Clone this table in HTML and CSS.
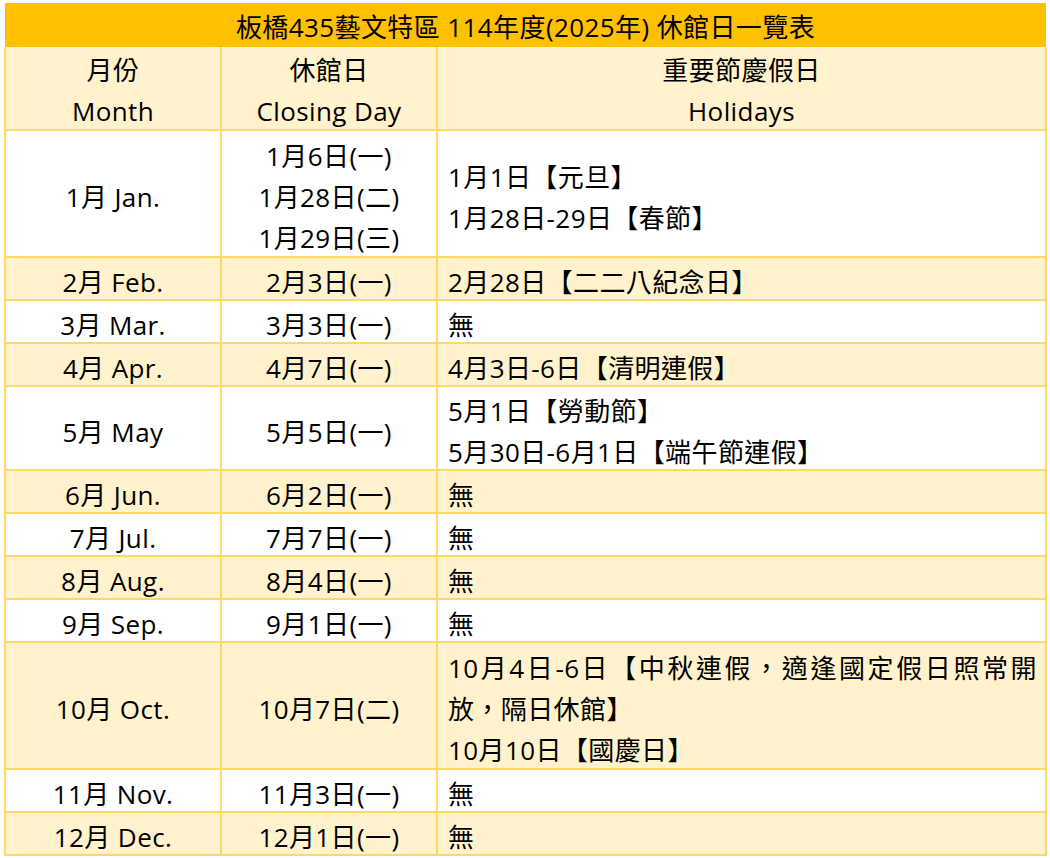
FILE: index.html
```html
<!DOCTYPE html>
<html lang="zh-Hant">
<head>
<meta charset="utf-8">
<title>板橋435藝文特區 114年度(2025年) 休館日一覽表</title>
<link rel="stylesheet" href="styles.css">
</head>
<body>
<div class="page">
<table class="sched">
  <colgroup>
    <col class="c1"><col class="c2"><col class="c3">
  </colgroup>
  <thead>
    <tr><th class="title" colspan="3"><span class="t">板橋435藝文特區 114年度(2025年) 休館日一覽表</span></th></tr>
    <tr class="hd">
      <th><span class="t">月份<br>Month</span></th>
      <th><span class="t">休館日<br>Closing Day</span></th>
      <th><span class="t">重要節慶假日<br>Holidays</span></th>
    </tr>
  </thead>
  <tbody>
    <tr class="w tall">
      <td><span class="t">1月 Jan.</span></td>
      <td><span class="t">1月6日(一)<br>1月28日(二)<br>1月29日(三)</span></td>
      <td class="hol"><span class="t">1月1日【元旦】<br>1月28日-29日【春節】</span></td>
    </tr>
    <tr class="y">
      <td><span class="t">2月 Feb.</span></td>
      <td><span class="t">2月3日(一)</span></td>
      <td class="hol"><span class="t">2月28日【二二八紀念日】</span></td>
    </tr>
    <tr class="w">
      <td><span class="t">3月 Mar.</span></td>
      <td><span class="t">3月3日(一)</span></td>
      <td class="hol"><span class="t">無</span></td>
    </tr>
    <tr class="y">
      <td><span class="t">4月 Apr.</span></td>
      <td><span class="t">4月7日(一)</span></td>
      <td class="hol"><span class="t">4月3日-6日【清明連假】</span></td>
    </tr>
    <tr class="w">
      <td><span class="t">5月 May</span></td>
      <td><span class="t">5月5日(一)</span></td>
      <td class="hol"><span class="t">5月1日【勞動節】<br>5月30日-6月1日【端午節連假】</span></td>
    </tr>
    <tr class="y">
      <td><span class="t">6月 Jun.</span></td>
      <td><span class="t">6月2日(一)</span></td>
      <td class="hol"><span class="t">無</span></td>
    </tr>
    <tr class="w">
      <td><span class="t">7月 Jul.</span></td>
      <td><span class="t">7月7日(一)</span></td>
      <td class="hol"><span class="t">無</span></td>
    </tr>
    <tr class="y">
      <td><span class="t">8月 Aug.</span></td>
      <td><span class="t">8月4日(一)</span></td>
      <td class="hol"><span class="t">無</span></td>
    </tr>
    <tr class="w">
      <td><span class="t">9月 Sep.</span></td>
      <td><span class="t">9月1日(一)</span></td>
      <td class="hol"><span class="t">無</span></td>
    </tr>
    <tr class="y tall">
      <td><span class="t">10月 Oct.</span></td>
      <td><span class="t">10月7日(二)</span></td>
      <td class="hol"><span class="t"><span class="ln just">10月4日-6日【中秋連假，適逢國定假日照常開</span><span class="ln">放，隔日休館】</span><span class="ln">10月10日【國慶日】</span></span></td>
    </tr>
    <tr class="w">
      <td><span class="t">11月 Nov.</span></td>
      <td><span class="t">11月3日(一)</span></td>
      <td class="hol"><span class="t">無</span></td>
    </tr>
    <tr class="y">
      <td><span class="t">12月 Dec.</span></td>
      <td><span class="t">12月1日(一)</span></td>
      <td class="hol"><span class="t">無</span></td>
    </tr>
  </tbody>
</table>
</div>
</body>
</html>
```

FILE: styles.css
```css
html, body {
  margin: 0;
  padding: 0;
  background: #ffffff;
}

.page {
  padding: 3px 0 0 4px;
}

.sched {
  border-collapse: collapse;
  table-layout: fixed;
  width: 1041px;
  font-family: "Open Sans", "Noto Sans CJK TC", sans-serif;
  font-size: 26px;
  font-weight: 400;
  letter-spacing: 0.4px;
  color: #000000;
}

.c1 { width: 216px; }
.c2 { width: 216px; }
.c3 { width: 609px; }

.sched th,
.sched td {
  border: 2px solid #ffd966;
  padding: 0 10px;
  line-height: 41px;
  text-align: center;
  vertical-align: middle;
  font-weight: 400;
}

/* text block nudged down to sit like the reference glyph baseline */
.t {
  display: block;
  margin-top: 4px;
  margin-bottom: -4px;
}

.ln {
  display: block;
}

.sched th.title {
  border: hidden;
  background: #ffc000;
  line-height: 44px;
  padding: 0;
}

.sched th.title .t {
  margin-top: 2px;
  margin-bottom: -2px;
}

.hd th {
  background: #fff2cc;
}

.hd th .t {
  margin-top: 3px;
  margin-bottom: -3px;
}

.w td { background: #ffffff; }
.y td { background: #fff2cc; }

.tall td {
  padding-top: 1px;
  padding-bottom: 1px;
}

.sched td.hol {
  text-align: left;
  padding-left: 10px;
  padding-right: 8px;
}

.just {
  text-align: justify;
  text-align-last: justify;
}
```
